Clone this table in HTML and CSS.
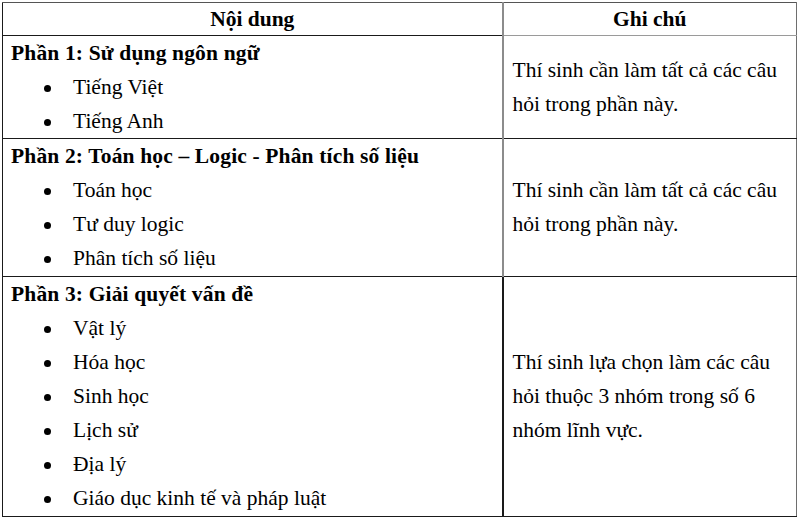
FILE: index.html
```html
<!DOCTYPE html>
<html lang="vi">
<head>
<meta charset="utf-8">
<title>Nội dung</title>
<link rel="stylesheet" href="styles.css">
</head>
<body>
<table class="grid">
  <colgroup><col class="col-main"><col class="col-note"></colgroup>
  <thead>
    <tr class="head-row">
      <th class="c-main">Nội dung</th>
      <th class="c-note">Ghi chú</th>
    </tr>
  </thead>
  <tbody>
    <tr class="r1">
      <td class="c-main">
        <div class="sec">Phần 1: Sử dụng ngôn ngữ</div>
        <ul class="items">
          <li>Tiếng Việt</li>
          <li>Tiếng Anh</li>
        </ul>
      </td>
      <td class="c-note">Thí sinh cần làm tất cả các câu hỏi trong phần này.</td>
    </tr>
    <tr class="r2">
      <td class="c-main">
        <div class="sec">Phần 2: Toán học – Logic - Phân tích số liệu</div>
        <ul class="items">
          <li>Toán học</li>
          <li>Tư duy logic</li>
          <li>Phân tích số liệu</li>
        </ul>
      </td>
      <td class="c-note">Thí sinh cần làm tất cả các câu hỏi trong phần này.</td>
    </tr>
    <tr class="r3">
      <td class="c-main">
        <div class="sec">Phần 3: Giải quyết vấn đề</div>
        <ul class="items">
          <li>Vật lý</li>
          <li>Hóa học</li>
          <li>Sinh học</li>
          <li>Lịch sử</li>
          <li>Địa lý</li>
          <li>Giáo dục kinh tế và pháp luật</li>
        </ul>
      </td>
      <td class="c-note">Thí sinh lựa chọn làm các câu hỏi thuộc 3 nhóm trong số 6 nhóm lĩnh vực.</td>
    </tr>
  </tbody>
</table>
</body>
</html>
```

FILE: styles.css
```css
html, body {
  margin: 0;
  padding: 0;
  background: #fff;
}

body {
  padding: 2px 0 0 2px;
  font-family: "Liberation Serif", "Times New Roman", serif;
  font-size: 21.5px;
  color: #000;
}

.grid {
  border-collapse: collapse;
  width: 794px;
  table-layout: fixed;
}

.col-main { width: 500px; }
.col-note { width: 294px; }

.grid th,
.grid td {
  padding: 0 8px;
  border: 1px solid #1a1a1a;
  line-height: 34px;
  text-align: left;
}

.r2 td,
.r3 td {
  padding-bottom: 1px;
}

.grid td.c-note {
  padding-left: 9px;
  vertical-align: middle;
}

.grid td.c-main {
  vertical-align: top;
}

.head-row th {
  font-weight: bold;
  text-align: center;
  line-height: 32px;
  border-top-color: #555;
}

.grid .c-note {
  border-left: 2px solid #8c8c8c;
  border-right-color: #6e6e6e;
}

.r3 .c-note {
  border-left-color: #1a1a1a;
}

.head-row .c-note {
  border-bottom-color: #9a9a9a;
}

.sec {
  font-weight: bold;
  letter-spacing: 0.15px;
}

.items {
  list-style: none;
  margin: 0;
  padding: 0;
}

.items li {
  display: flex;
  align-items: center;
}

.items li::before {
  content: "";
  flex: none;
  width: 7px;
  height: 7px;
  border-radius: 50%;
  background: #000;
  margin: 2px 22px 0 33px;
}
```
